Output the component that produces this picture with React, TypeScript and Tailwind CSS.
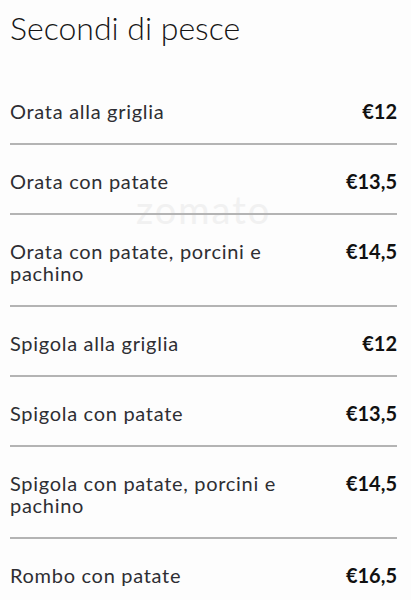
const items = [
  { name: "Orata alla griglia", price: "€12" },
  { name: "Orata con patate", price: "€13,5" },
  { name: "Orata con patate, porcini e pachino", price: "€14,5" },
  { name: "Spigola alla griglia", price: "€12" },
  { name: "Spigola con patate", price: "€13,5" },
  { name: "Spigola con patate, porcini e pachino", price: "€14,5" },
  { name: "Rombo con patate", price: "€16,5" },
];

export default function App() {
  return (
    <div className="relative min-h-[600px] w-[411px] overflow-hidden bg-[#fdfdfd] font-['Lato',sans-serif]">
      <div className="pointer-events-none absolute left-[136px] top-[190px] text-[38px] leading-none tracking-[2px] text-[#f1f1f1]">
        zomato
      </div>
      <div className="relative pl-[10px] pr-[14px]">
        <h1 className="pt-[10px] text-[32px] font-light leading-[36px] text-[#161616]">Secondi di pesce</h1>
        <ul className="mt-[29px]">
          {items.map((item, i) => (
            <li
              key={i}
              className={`flex items-start justify-between gap-4 pt-[25px] pb-[21px] ${
                i < items.length - 1 ? "border-b-2 border-[#b4b4b4]" : ""
              }`}
            >
              <span className="max-w-[285px] text-[20px] leading-[22px] tracking-[0.7px] text-[#2e2e33]">
                {item.name}
              </span>
              <span className="text-[20px] font-bold leading-[22px] text-[#111]">{item.price}</span>
            </li>
          ))}
        </ul>
      </div>
    </div>
  );
}
